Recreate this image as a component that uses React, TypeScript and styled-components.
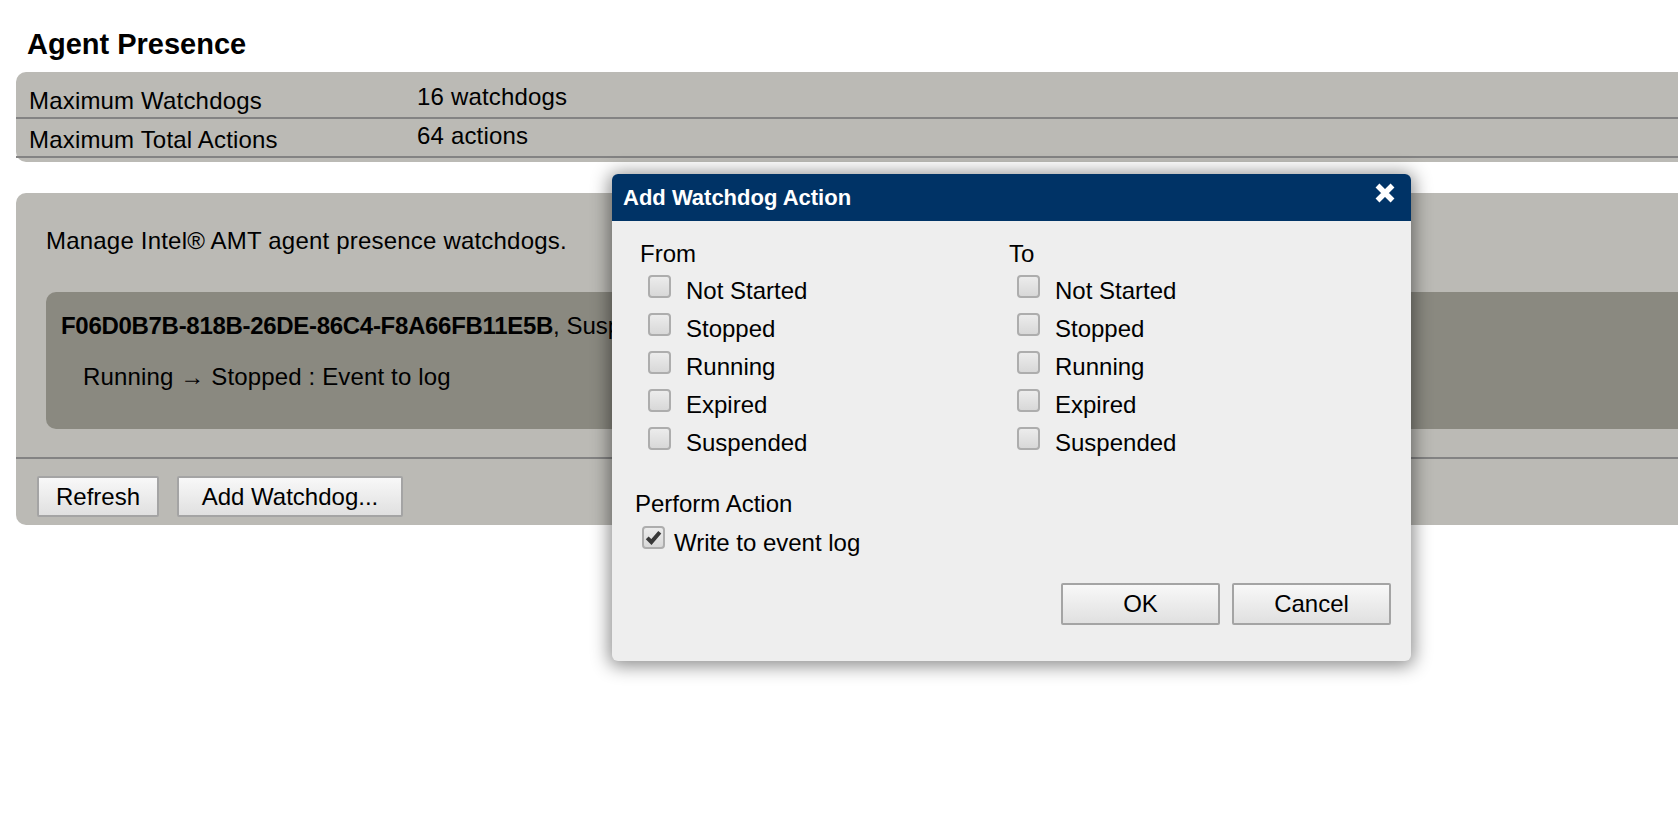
import styled, { createGlobalStyle } from 'styled-components'

const GlobalStyle = createGlobalStyle`
  html, body {
    margin: 0;
    padding: 0;
    background: #fff;
    overflow: hidden;
  }
  body {
    font-family: 'Liberation Sans', Arial, sans-serif;
    font-size: 24px;
    color: #000;
  }
`

const watchdogStates = ['Not Started', 'Stopped', 'Running', 'Expired', 'Suspended']

const CloseIcon = () => (
  <svg width="22" height="22" viewBox="0 0 22 22">
    <path d="M3.5 3.5 L18.5 18.5 M18.5 3.5 L3.5 18.5" stroke="#fff" strokeWidth="5.5" />
  </svg>
)

const CheckMark = () => (
  <svg width="17" height="17" viewBox="0 0 17 17">
    <path d="M2.2 8.8 L6.4 13 L14.8 3.2" fill="none" stroke="#383838" strokeWidth="4" />
  </svg>
)

const StateColumn = ({ title }) => (
  <div>
    <ColumnTitle>{title}</ColumnTitle>
    {watchdogStates.map(s => (
      <StateRow key={s}>
        <CheckBox />
        <span>{s}</span>
      </StateRow>
    ))}
  </div>
)

export default function App() {
  return (
    <>
      <GlobalStyle />
      <Page>
        <Heading>Agent Presence</Heading>
        <InfoPanel>
          <InfoRow>
            <InfoLabel>Maximum Watchdogs</InfoLabel>
            <InfoValue>16 watchdogs</InfoValue>
          </InfoRow>
          <InfoRow>
            <InfoLabel>Maximum Total Actions</InfoLabel>
            <InfoValue>64 actions</InfoValue>
          </InfoRow>
        </InfoPanel>

        <WatchdogPanel>
          <Intro>Manage Intel® AMT agent presence watchdogs.</Intro>
          <WatchdogCard>
            <WatchdogTitle>
              <Guid>F06D0B7B-818B-26DE-86C4-F8A66FB11E5B</Guid>, Suspended
            </WatchdogTitle>
            <WatchdogAction>Running → Stopped : Event to log</WatchdogAction>
          </WatchdogCard>
          <ButtonBar>
            <Button $width={122} $height={41}>Refresh</Button>
            <Button $width={226} $height={41}>Add Watchdog...</Button>
          </ButtonBar>
        </WatchdogPanel>

        <Dialog>
          <TitleBar>
            <span>Add Watchdog Action</span>
            <CloseButton>
              <CloseIcon />
            </CloseButton>
          </TitleBar>
          <DialogBody>
            <Columns>
              <StateColumn title="From" />
              <StateColumn title="To" />
            </Columns>
            <PerformTitle>Perform Action</PerformTitle>
            <ActionRow>
              <CheckBox>
                <CheckMark />
              </CheckBox>
              <span>Write to event log</span>
            </ActionRow>
            <DialogFooter>
              <Button $width={159} $height={42}>OK</Button>
              <Button $width={159} $height={42}>Cancel</Button>
            </DialogFooter>
          </DialogBody>
        </Dialog>
      </Page>
    </>
  )
}

const Page = styled.div`
  position: relative;
  min-height: 832px;
  padding-left: 16px;
`

const Heading = styled.h3`
  margin: 0 0 12px 11px;
  padding-top: 28px;
  font-size: 29px;
  line-height: 32px;
  font-weight: bold;
`

const InfoPanel = styled.div`
  background: #bbbab5;
  border-radius: 10px 0 0 10px;
  padding: 8px 0 4px;
  letter-spacing: 0.18px;
`

const InfoRow = styled.div`
  display: grid;
  grid-template-columns: 388px 1fr;
  height: 37px;
  padding-left: 13px;
  border-bottom: 2px solid #838383;
`

const InfoLabel = styled.div`
  padding-top: 7px;
  line-height: 27px;
`

const InfoValue = styled.div`
  padding-top: 3px;
  line-height: 27px;
`

const WatchdogPanel = styled.div`
  margin-top: 31px;
  background: #bbbab5;
  border-radius: 10px 0 0 10px;
  padding-bottom: 8px;
`

const Intro = styled.div`
  padding: 34px 0 0 30px;
  line-height: 27px;
  letter-spacing: 0.2px;
`

const WatchdogCard = styled.div`
  margin: 38px 0 0 30px;
  height: 137px;
  box-sizing: border-box;
  padding: 20px 0 0 15px;
  background: #8a8980;
  border-radius: 10px 0 0 10px;
`

const WatchdogTitle = styled.div`
  line-height: 27px;
  white-space: nowrap;
`

const Guid = styled.b`
  letter-spacing: -0.3px;
`

const WatchdogAction = styled.div`
  margin-top: 24px;
  padding-left: 22px;
  line-height: 27px;
  letter-spacing: 0.15px;
`

const ButtonBar = styled.div`
  display: flex;
  gap: 18px;
  margin-top: 28px;
  padding: 17px 0 0 21px;
  border-top: 2px solid #838383;
`

const Button = styled.button`
  width: ${p => p.$width}px;
  height: ${p => p.$height}px;
  padding: 0;
  font-family: inherit;
  font-size: 24px;
  color: #000;
  background: linear-gradient(#f8f8f8, #e0e0e0);
  border: 2px solid #a4a4a4;
  border-radius: 2px;
`

const Dialog = styled.div`
  position: absolute;
  left: 612px;
  top: 174px;
  width: 799px;
  background: #eeeeee;
  border-radius: 6px;
  overflow: hidden;
  box-shadow: 0 2px 18px 3px rgba(0, 0, 0, 0.45);
`

const TitleBar = styled.div`
  height: 47px;
  display: flex;
  align-items: center;
  justify-content: space-between;
  padding: 0 15px 0 11px;
  background: #003366;
  color: #fff;
  font-size: 22px;
  font-weight: bold;
`

const CloseButton = styled.span`
  align-self: flex-start;
  margin-top: 8px;
  display: flex;
`

const DialogBody = styled.div`
  display: flex;
  flex-direction: column;
  padding: 19px 20px 36px 23px;
`

const Columns = styled.div`
  display: grid;
  grid-template-columns: 369px 1fr;
  margin-left: 5px;
`

const ColumnTitle = styled.div`
  line-height: 27px;
  margin-bottom: 4px;
`

const CheckBox = styled.span`
  width: 23px;
  height: 23px;
  box-sizing: border-box;
  flex: none;
  display: flex;
  align-items: center;
  justify-content: center;
  border: 2px solid #adadad;
  border-radius: 4px;
  background: linear-gradient(#ececec, #d8d8d8);
`

const StateRow = styled.div`
  display: flex;
  align-items: center;
  gap: 15px;
  height: 38px;
  padding-left: 8px;
  line-height: 27px;

  & > ${CheckBox} {
    margin-bottom: 8px;
  }
`

const PerformTitle = styled.div`
  margin-top: 29px;
  line-height: 27px;
`

const ActionRow = styled.div`
  display: flex;
  align-items: flex-start;
  gap: 9px;
  margin-top: 12px;
  padding-left: 7px;
  line-height: 27px;

  & > ${CheckBox} {
    margin-top: -3px;
  }
`

const DialogFooter = styled.div`
  display: flex;
  justify-content: flex-end;
  gap: 12px;
  margin-top: 27px;
`
